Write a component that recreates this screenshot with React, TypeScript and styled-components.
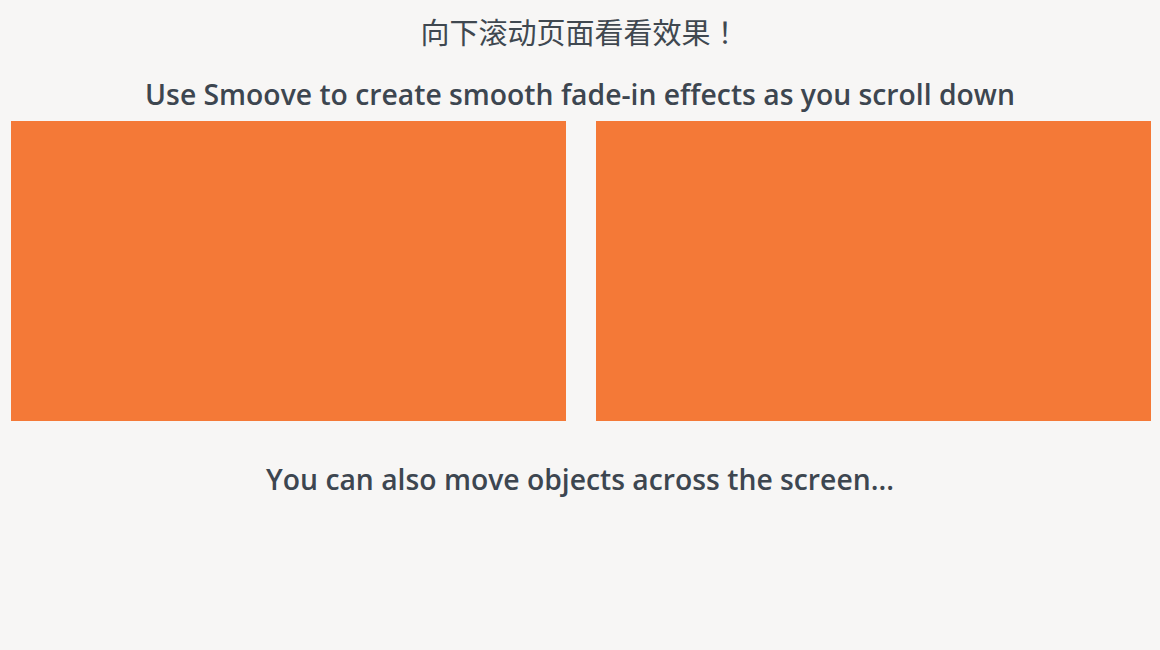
import React, { ReactElement } from 'react';
import styled, { createGlobalStyle } from 'styled-components';

const GlobalStyle = createGlobalStyle`
  html, body {
    margin: 0;
    padding: 0;
    background: #f7f6f5;
  }
  body {
    font-family: "Open Sans", "Noto Sans CJK SC", sans-serif;
    color: #3d4650;
  }
`;

// 최상위 컨테이너
const Container = styled.div`
  width: 1160px;
  height: 650px;
  display: flex;
  flex-direction: column;
  align-items: center;
`;

const Title = styled.h1`
  margin: 12px 0 0;
  font-size: 29px;
  line-height: 38px;
  font-weight: 400;
  font-family: "Noto Sans CJK JP", "Noto Sans CJK SC", sans-serif;
  color: #404850;
`;

const Heading = styled.h2<{ $top: number }>`
  margin: ${(p) => p.$top}px 0 0;
  font-size: 28.3px;
  line-height: 36px;
  font-weight: 600;
  color: #3d4650;
`;

const BoxRow = styled.div`
  display: flex;
  gap: 30px;
  align-self: stretch;
  padding: 0 9px 0 11px;
  margin-top: 9px;
`;

const Box = styled.div`
  flex: 1;
  height: 300px;
  background: #f47937;
`;

function App(): ReactElement {
  return (
    <Container>
      <GlobalStyle />
      <Title>向下滚动页面看看效果！</Title>
      <Heading $top={26}>Use Smoove to create smooth fade-in effects as you scroll down</Heading>
      <BoxRow>
        <Box />
        <Box />
      </BoxRow>
      <Heading $top={40}>You can also move objects across the screen...</Heading>
    </Container>
  );
}

export default App;
